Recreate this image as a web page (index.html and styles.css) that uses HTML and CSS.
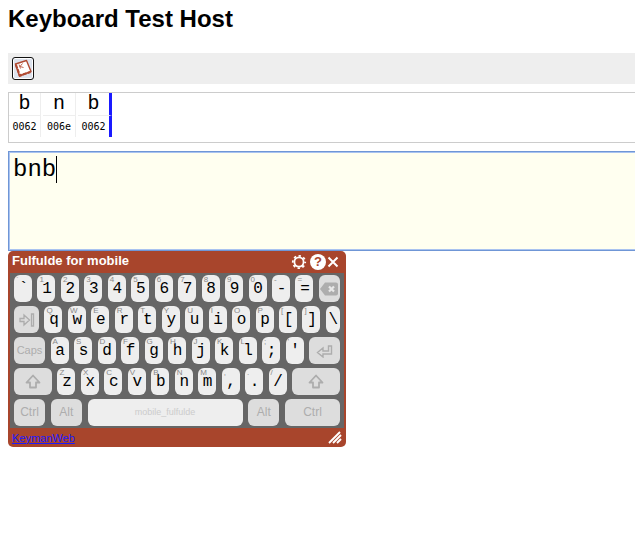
FILE: index.html
```html
<!DOCTYPE html>
<html lang="en">
<head>
    <meta charset="UTF-8">
    <meta name="viewport" content="width=device-width, initial-scale=1.0">
    <title>Keyboard Test Host</title>
    <link rel="stylesheet" href="styles.css">
</head>
<body>
    <h1>Keyboard Test Host</h1>

    <!-- Toolbar -->
    <div class="toolbar">
        <button class="toolbar-button" aria-label="Keyboard">
            <svg width="20" height="21" viewBox="0 0 20 21">
                <path d="M2.500 6 L13.500 2.500 L18 13.500 L6.500 18 Z" fill="#fff" stroke="#b04a32" stroke-width="1.400" stroke-linejoin="round"/>
                <path d="M2.800 6.500 L6.800 17.600 L17.500 14" fill="none" stroke="#b04a32" stroke-width="2.200" stroke-dasharray="4 1"/>
                <path d="M6 6.500 L7.500 10.500 M9.500 5.500 L7 8.500 L10.500 9.500" fill="none" stroke="#c0604a" stroke-width="1"/>
            </svg>
        </button>
    </div>

    <!-- Characters and their code points -->
    <div class="chars">
        <table>
            <tr class="glyphs"><td>b</td><td>n</td><td class="current">b</td></tr>
            <tr class="codes"><td>0062</td><td>006e</td><td class="current">0062</td></tr>
        </table>
    </div>

    <div class="editor">
        <textarea aria-label="Text" spellcheck="false">bnb</textarea>
        <span class="caret"></span>
    </div>

    <!-- On-screen keyboard -->
    <div class="osk">
        <div class="osk-header">
            <span class="osk-title">Fulfulde for mobile</span>
            <button class="osk-icon" aria-label="Settings">
                <svg width="16" height="16" viewBox="0 0 16 16">
                    <circle cx="8" cy="8" r="4.600" fill="none" stroke="#fff" stroke-width="1.800"/>
                    <circle cx="8" cy="8" r="6.200" fill="none" stroke="#fff" stroke-width="1.800" stroke-dasharray="2.400 2.470" stroke-dashoffset="1.200"/>
                </svg>
            </button>
            <button class="osk-icon osk-help" aria-label="Help">?</button>
            <button class="osk-icon" aria-label="Close">
                <svg width="14" height="16" viewBox="0 0 14 16">
                    <path d="M2.500 3.500 L11.500 12.500 M11.500 3.500 L2.500 12.500" stroke="#fff" stroke-width="2"/>
                </svg>
            </button>
        </div>

        <div class="keys" id="keys"></div>

        <div class="osk-footer">
            <a href="#">KeymanWeb</a>
            <svg width="14" height="13" viewBox="0 0 14 13">
                <path d="M1 12 L12 1 M5 12 L13 4 M9 12 L13 8" stroke="#fff" stroke-width="1.900"/>
            </svg>
        </div>
    </div>

    <script>
        const icons = {
            backspace: '<svg width="20" height="16" viewBox="0 0 20 16"><path d="M1 8 L6 1.500 H17 Q19 1.500 19 3.500 V12.500 Q19 14.500 17 14.500 H6 Z" fill="#adadad"/><path d="M10 5.500 L15 10.500 M15 5.500 L10 10.500" stroke="#e8e8e8" stroke-width="2.200"/></svg>',
            tab: '<svg width="16" height="16" viewBox="0 0 16 16"><path d="M1 6.500 H5 V3 L10.500 8 L5 13 V9.500 H1 Z M12.500 2 H14.500 V14 H12.500 Z" fill="none" stroke="#adadad" stroke-width="1.300"/></svg>',
            enter: '<svg width="18" height="14" viewBox="0 0 18 14"><path d="M1.500 8.500 L7 4 V7 H12.500 V2 H15.500 V10 H7 V13 Z" fill="none" stroke="#adadad" stroke-width="1.400"/></svg>',
            shift: '<svg width="16" height="16" viewBox="0 0 16 16"><path d="M8 1.500 L14.500 8.500 H11 V13.500 H5 V8.500 H1.500 Z" fill="none" stroke="#adadad" stroke-width="1.800" stroke-linejoin="round"/></svg>'
        };

        // Each key: [label, small cap] or {name, size, icon}
        const rows = [
            [['`', '`'], ['1', '1'], ['2', '2'], ['3', '3'], ['4', '4'], ['5', '5'], ['6', '6'], ['7', '7'], ['8', '8'], ['9', '9'], ['0', '0'], ['-', '-'], ['=', '='],
             { name: 'Backspace', size: 'backspace', icon: 'backspace' }],
            [{ name: 'Tab', size: 'tab', icon: 'tab' },
             ['q', 'Q'], ['w', 'W'], ['e', 'E'], ['r', 'R'], ['t', 'T'], ['y', 'Y'], ['u', 'U'], ['i', 'I'], ['o', 'O'], ['p', 'P'], ['[', '['], [']', ']'], ['\\', '', 'narrow']],
            [{ name: 'Caps', size: 'medium caps' },
             ['a', 'A'], ['s', 'S'], ['d', 'D'], ['f', 'F'], ['g', 'G'], ['h', 'H'], ['j', 'J'], ['k', 'K'], ['l', 'L'], [';', ';'], ["'", "'"],
             { name: 'Enter', size: 'medium', icon: 'enter' }],
            [{ name: 'Left shift', size: 'shift', icon: 'shift' },
             ['z', 'Z'], ['x', 'X'], ['c', 'C'], ['v', 'V'], ['b', 'B'], ['n', 'N'], ['m', 'M'], [',', ','], ['.', '.'], ['/', '/'],
             { name: 'Right shift', size: 'wide-shift', icon: 'shift' }],
            [{ name: 'Ctrl', size: 'medium' }, { name: 'Alt', size: 'medium' }, { name: 'mobile_fulfulde', size: 'space' },
             { name: 'Alt', size: 'medium' }, { name: 'Ctrl', size: 'wide-ctrl' }]
        ];

        // Build the rows of keys
        const keys = document.getElementById("keys");
        rows.forEach(row => {
            const rowElement = document.createElement("div");
            rowElement.className = "key-row";
            row.forEach(key => {
                const button = document.createElement("button");
                if (Array.isArray(key)) {
                    button.className = "key " + (key[2] || "");
                    button.innerHTML = `<span class="cap">${key[1]}</span>${key[0]}`;
                } else {
                    button.className = "key special " + key.size;
                    button.setAttribute("aria-label", key.name);
                    button.innerHTML = key.icon ? icons[key.icon] : key.name;
                }
                rowElement.appendChild(button);
            });
            keys.appendChild(rowElement);
        });
    </script>
</body>
</html>
```

FILE: styles.css
```css
body {
    font-family: Arial, "Liberation Sans", sans-serif;
    margin: 0 0 0 8px;
    background-color: white;
}
h1 {
    margin: 0;
    padding: 5px 0 20px;
    font-size: 24px;
    line-height: 28px;
}
button {
    padding: 0;
    border: none;
    background: none;
    cursor: pointer;
}
.toolbar {
    display: flex;
    padding: 4px;
    background-color: #eee;
}
.toolbar-button {
    display: flex;
    border: 1px solid #111;
    border-radius: 3px;
    background-color: #dde3ee;
    box-shadow: inset 0 0 0 1px #fff;
}
.chars {
    margin-top: 8px;
    padding-bottom: 5px;
    border: 1px solid #ccc;
    border-right: none;
}
.chars table {
    margin-left: -2px;
    border-collapse: separate;
    border-spacing: 2px 0;
}
.chars td {
    width: 33px;
    box-sizing: border-box;
    padding: 0;
    border-right: 1px solid #eee;
    text-align: center;
}
.chars td:first-child {
    width: 32px;
}
.chars td.current {
    width: 34px;
    border-right: 3px solid #1a1aff;
}
.glyphs td {
    height: 23px;
    border-bottom: 1px solid #eee;
    font: 20px/22px "Courier New", "Liberation Mono", monospace;
}
.codes td {
    height: 21px;
    font: 10px/20px "DejaVu Sans Mono", monospace;
}
.editor {
    position: relative;
    margin-top: 8px;
}
.editor textarea {
    display: block;
    width: 100%;
    height: 100px;
    box-sizing: border-box;
    padding: 4px;
    border: 1px solid #6f96d6;
    border-right: none;
    border-radius: 0;
    outline: none;
    box-shadow: inset 1px 1px #a9c3f0, inset 0 -1px #a9c3f0;
    resize: none;
    background-color: #fffff0;
    color: black;
    font: 24px/27px "Courier New", "Liberation Mono", monospace;
}
.caret {
    position: absolute;
    left: 48px;
    top: 5px;
    width: 1px;
    height: 27px;
    background-color: black;
}
.osk {
    width: 338px;
    overflow: hidden;
    border-radius: 5px;
    background-color: #a8452c;
}
.osk-header {
    display: flex;
    align-items: center;
    height: 22px;
    padding: 0 6px 0 4px;
}
.osk-title {
    flex: 1;
    padding-bottom: 2px;
    color: white;
    font-size: 13px;
    font-weight: bold;
    line-height: 16px;
}
.osk-icon {
    display: flex;
}
.osk-help {
    justify-content: center;
    width: 16px;
    height: 16px;
    margin-left: 3px;
    border-radius: 50%;
    background-color: white;
    color: #a8452c;
    font: bold 13px/16px Arial, "Liberation Sans", sans-serif;
}
.keys {
    display: flex;
    flex-direction: column;
    gap: 4px;
    margin: 0 2px;
    padding: 2px 4px;
    background-color: #666;
}
.key-row {
    display: flex;
    justify-content: space-between;
}
.key {
    position: relative;
    width: 18px;
    height: 27px;
    padding: 2px 0 0 1px;
    border-radius: 6px;
    background-color: #eee;
    color: black;
    font: 16px/25px "Courier New", "Liberation Mono", monospace;
}
.cap {
    position: absolute;
    left: 2px;
    top: 1px;
    color: #888;
    font: 8px/8px Arial, "Liberation Sans", sans-serif;
}
.special {
    display: flex;
    align-items: center;
    justify-content: center;
    padding: 0;
    background-color: #ddd;
    color: #adadad;
    font: 12px/27px Arial, "Liberation Sans", sans-serif;
}
.caps {
    font-size: 11px;
}
.narrow {
    width: 14px;
}
.backspace {
    width: 21px;
}
.tab {
    width: 25px;
}
.medium {
    width: 31px;
}
.shift {
    width: 38px;
}
.wide-shift {
    width: 48px;
}
.wide-ctrl {
    width: 55px;
}
.space {
    width: 155px;
    background-color: #eee;
    color: #ccc;
    font-size: 9px;
}
.osk-footer {
    display: flex;
    align-items: center;
    justify-content: space-between;
    height: 19px;
    padding: 0 4px;
}
.osk-footer a {
    color: #1a1aff;
    font-size: 11px;
    line-height: 16px;
}
```
